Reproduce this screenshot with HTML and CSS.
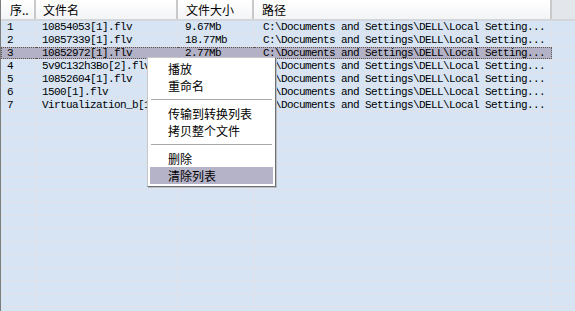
FILE: index.html
```html
<!DOCTYPE html>
<html lang="zh-CN">
<head>
    <meta charset="UTF-8">
    <title>文件列表</title>
    <link rel="stylesheet" href="styles.css">
</head>
<body>
    <div class="list-view">
        <div class="header">
            <div class="hcell c-no">序..</div>
            <div class="hcell c-name">文件名</div>
            <div class="hcell c-size">文件大小</div>
            <div class="hcell c-path">路径</div>
            <div class="hcell c-fill"></div>
        </div>
        <div class="rows" id="rows"></div>

        <!-- 右键菜单 -->
        <div class="context-menu">
            <div class="menu-item">播放</div>
            <div class="menu-item">重命名</div>
            <div class="menu-sep"></div>
            <div class="menu-item">传输到转换列表</div>
            <div class="menu-item">拷贝整个文件</div>
            <div class="menu-sep"></div>
            <div class="menu-item">删除</div>
            <div class="menu-item active">清除列表</div>
        </div>
    </div>

    <script>
        const files = [
            ['1', '10854053[1].flv', '9.67Mb'],
            ['2', '10857339[1].flv', '18.77Mb'],
            ['3', '10852972[1].flv', '2.77Mb'],
            ['4', '5v9C132h3Bo[2].flv', ''],
            ['5', '10852604[1].flv', ''],
            ['6', '1500[1].flv', ''],
            ['7', 'Virtualization_b[1].flv', '']
        ];
        const path = 'C:\\Documents and Settings\\DELL\\Local Setting...';
        const rows = document.getElementById('rows');

        // 空行也要画出网格线
        for (let i = 0; i < 23; i++) {
            const f = files[i];
            const row = document.createElement('div');
            row.className = 'row' + (i === 2 ? ' selected' : '');
            row.innerHTML =
                `<div class="cell c-no">${f ? f[0] : ''}</div>` +
                `<div class="cell c-name">${f ? f[1] : ''}</div>` +
                `<div class="cell c-size">${f ? f[2] : ''}</div>` +
                `<div class="cell c-path">${f ? path : ''}</div>` +
                `<div class="cell c-fill"></div>`;
            rows.appendChild(row);
        }
    </script>
</body>
</html>
```

FILE: styles.css
```css
body {
    margin: 0;
    padding: 0;
    background-color: #d6e4f4;
    font-family: "Noto Sans CJK SC", sans-serif;
    color: #000;
    overflow: hidden;
}
.list-view {
    position: relative;
    width: 575px;
    height: 311px;
    overflow: hidden;
    border-left: 1px solid #7d7d7d;
    box-sizing: border-box;
}
.header {
    display: flex;
    height: 21px;
    box-sizing: border-box;
    border-bottom: 2px solid #d3d6da;
    background: linear-gradient(#ffffff, #f3f4f6);
}
.hcell {
    height: 19px;
    line-height: 19px;
    font-size: 12px;
    box-sizing: border-box;
    white-space: nowrap;
    overflow: hidden;
    border-right: 2px solid #c9c9c9;
}
.header .c-no { padding-left: 9px; }
.header .c-name { padding-left: 7px; }
.header .c-size { padding-left: 8px; }
.header .c-path { padding-left: 8px; }
.header .c-fill {
    border-right: none;
    background-color: #e3e6ea;
}
.c-no { width: 35px; flex: none; }
.c-name { width: 142px; flex: none; }
.c-size { width: 76px; flex: none; }
.c-path { width: 298px; flex: none; }
.c-fill { flex: 1; }

.row {
    display: flex;
    height: 13px;
    box-sizing: border-box;
    border-bottom: 1px solid #e2e1ea;
}
.cell {
    height: 12px;
    line-height: 12px;
    font-family: "Liberation Mono", monospace;
    font-size: 11px;
    letter-spacing: -0.6px;
    white-space: nowrap;
    overflow: hidden;
    box-sizing: border-box;
    border-right: 1px solid #e2e1ea;
}
.row .c-no { padding-left: 6px; }
.row .c-name { padding-left: 6px; }
.row .c-size { padding-left: 7px; }
.row .c-path { padding-left: 9px; }
.row .c-fill { border-right: none; }

.row.selected .c-no,
.row.selected .c-name,
.row.selected .c-size,
.row.selected .c-path {
    background-color: #b2b1c5;
    border-top: 1px dotted #555;
    border-bottom: 1px dotted #555;
    border-right: none;
    line-height: 10px;
}
.row.selected .c-path { border-right: 1px dotted #555; }
.row.selected .c-no { border-left: 1px dotted #555; padding-left: 5px; }

/* 右键菜单 */
.context-menu {
    position: absolute;
    left: 146px;
    top: 57px;
    width: 129px;
    padding: 2px 2px;
    box-sizing: border-box;
    background-color: #fff;
    border: 1px solid #c8c8c8;
    border-right-color: #707070;
    border-bottom-color: #707070;
    box-shadow: 1px 1px 0 #b8bcc4;
}
.menu-item {
    height: 17px;
    line-height: 17px;
    font-size: 12px;
    padding-left: 18px;
    white-space: nowrap;
}
.menu-item.active {
    background-color: #b5b3c8;
}
.menu-sep {
    height: 1px;
    margin: 5px 1px;
    background-color: #a8a8a8;
}
```
